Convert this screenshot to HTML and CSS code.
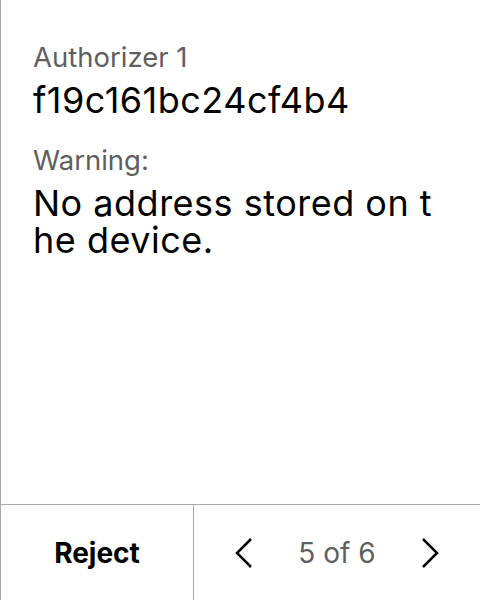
FILE: index.html
```html
<!DOCTYPE html>
<html>
<head>
<meta charset="utf-8">
<link rel="stylesheet" href="styles.css">
</head>
<body>
<div class="screen">
  <main class="content">
    <div class="field">
      <div class="label">Authorizer 1</div>
      <div class="value">f19c161bc24cf4b4</div>
    </div>
    <div class="field">
      <div class="label">Warning:</div>
      <div class="value">No address stored on the device.</div>
    </div>
  </main>
  <footer class="footer">
    <div class="reject">Reject</div>
    <div class="pager">
      <svg class="chev" width="18" height="32" viewBox="0 0 18 32"><path d="M16 2 L2 16 L16 30" fill="none" stroke="#000" stroke-width="2.5"/></svg>
      <span class="count">5 of 6</span>
      <svg class="chev" width="18" height="32" viewBox="0 0 18 32"><path d="M2 2 L16 16 L2 30" fill="none" stroke="#000" stroke-width="2.5"/></svg>
    </div>
  </footer>
</div>
</body>
</html>
```

FILE: styles.css
```css
html, body {
  margin: 0;
  padding: 0;
  background: #fff;
}
.screen {
  width: 480px;
  height: 600px;
  box-sizing: border-box;
  border-left: 1px solid #a9a9a9;
  display: flex;
  flex-direction: column;
  font-family: Inter, "Noto Sans", sans-serif;
  font-optical-sizing: none;
  font-variation-settings: "opsz" 14;
  color: #000;
}
.content {
  flex: 1;
  padding: 40px 32px 0 32px;
  display: flex;
  flex-direction: column;
  gap: 24px;
}
.label {
  font-size: 27.5px;
  line-height: 34px;
  color: #5f5f5f;
}
.value {
  font-size: 36px;
  line-height: 37px;
  letter-spacing: 0.5px;
  word-break: break-all;
  margin-top: 8px;
}
.footer {
  height: 95px;
  border-top: 1px solid #a9a9a9;
  display: flex;
}
.reject {
  width: 192px;
  border-right: 1px solid #a9a9a9;
  display: flex;
  align-items: center;
  justify-content: center;
  font-size: 28px;
  font-weight: 700;
}
.pager {
  flex: 1;
  display: flex;
  align-items: center;
  justify-content: space-between;
  padding: 0 41px;
}
.count {
  font-size: 28px;
  color: #5f5f5f;
}
```
